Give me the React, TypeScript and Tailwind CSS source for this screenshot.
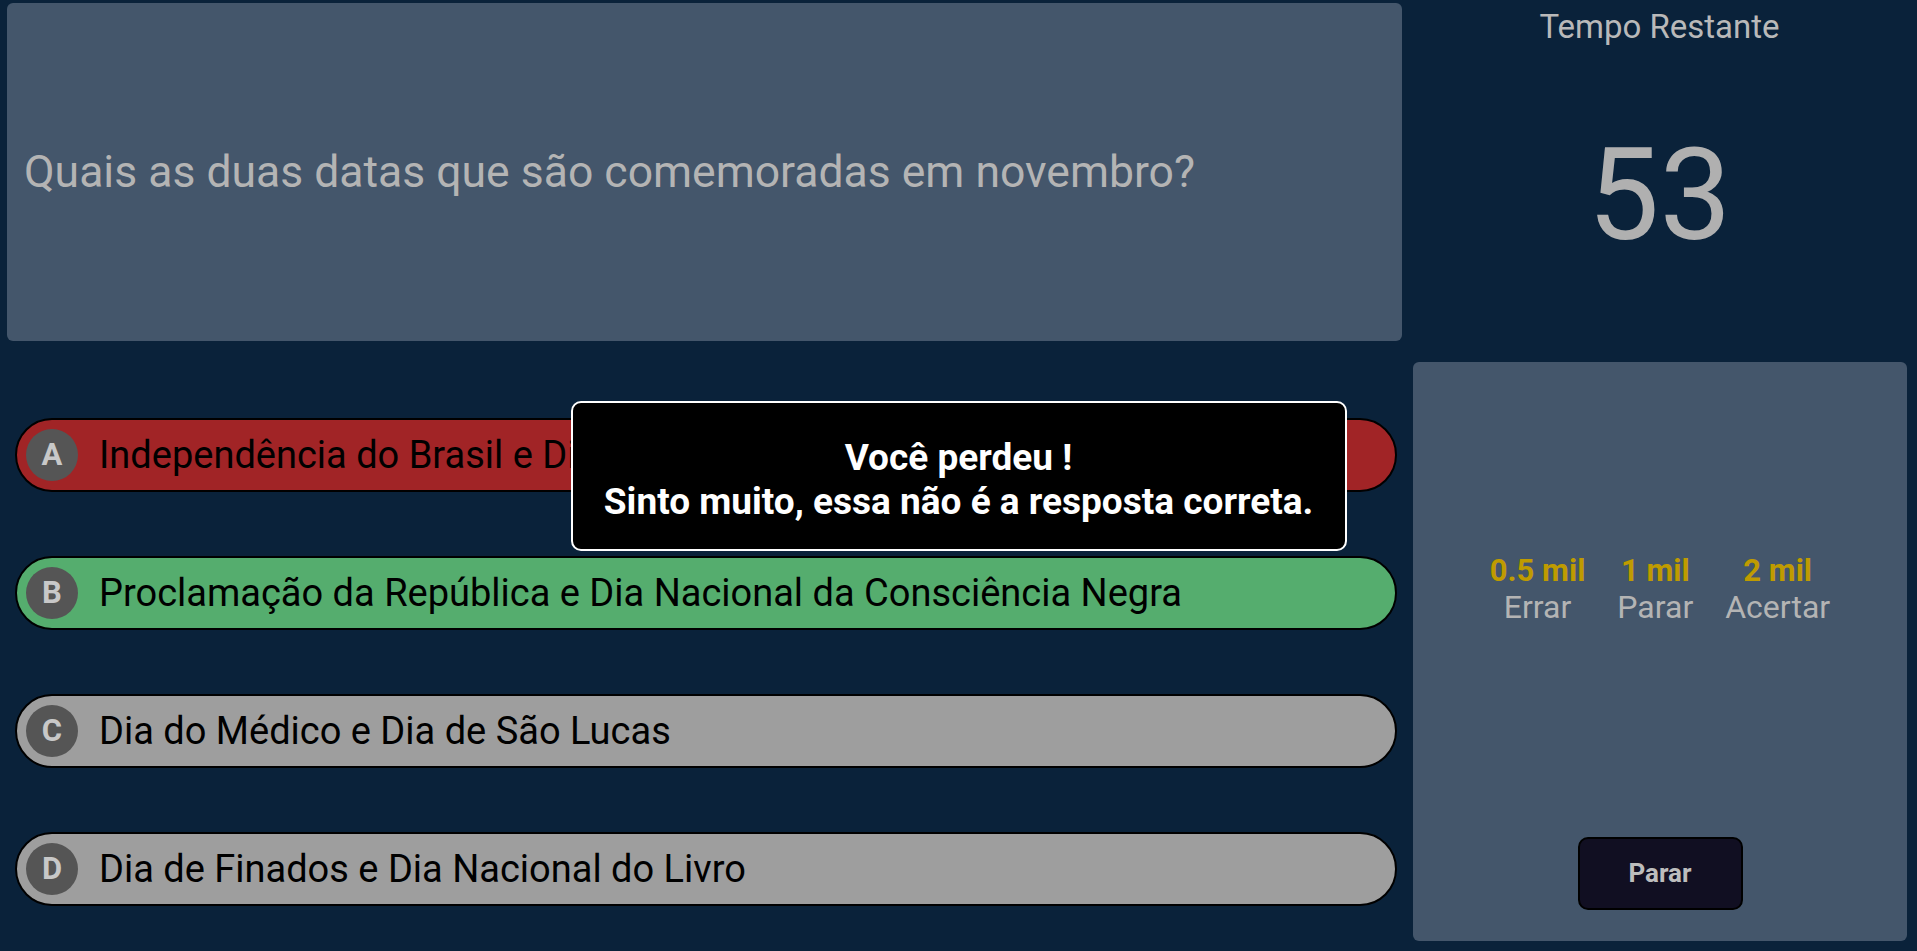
import React from "react";

type Answer = {
  letter: string;
  text: string;
  tone: "wrong" | "right" | "idle";
};

const answers: Answer[] = [
  { letter: "A", text: "Independência do Brasil e Dia da Bandeira", tone: "wrong" },
  { letter: "B", text: "Proclamação da República e Dia Nacional da Consciência Negra", tone: "right" },
  { letter: "C", text: "Dia do Médico e Dia de São Lucas", tone: "idle" },
  { letter: "D", text: "Dia de Finados e Dia Nacional do Livro", tone: "idle" },
];

const toneClass = {
  wrong: "bg-[#a12426]",
  right: "bg-[#55ad6e]",
  idle: "bg-[#9e9e9e]",
};

function AnswerPill({ answer }: { answer: Answer }) {
  return (
    <div
      className={`ml-[15px] flex h-[74px] w-[1382px] items-center rounded-full border-2 border-black pl-[9px] ${toneClass[answer.tone]}`}
    >
      <span className="flex h-[52px] w-[52px] shrink-0 items-center justify-center rounded-full bg-[#555555] text-[31px] font-bold text-[#c8c8c8]">
        {answer.letter}
      </span>
      <span className="ml-[21px] text-[38px] leading-none text-black">{answer.text}</span>
    </div>
  );
}

function Prize({ value, label }: { value: string; label: string }) {
  return (
    <div className="flex flex-col items-center leading-[37px]">
      <span className="text-[31px] font-bold text-[#bf9b00]">{value}</span>
      <span className="text-[32px] text-[#b4b4b4]">{label}</span>
    </div>
  );
}

export default function App() {
  return (
    <div
      className="grid h-screen w-full grid-cols-[1402px_1fr] overflow-hidden bg-[#0a223a]"
      style={{ fontFamily: "Roboto, 'Noto Sans', sans-serif" }}
    >
      {/* pergunta + alternativas */}
      <div className="flex flex-col pl-[7px] pt-[3px]">
        <div className="flex h-[338px] w-[1395px] items-center rounded-md bg-[#44566b] pl-[17px]">
          <h1 className="text-[44.5px] font-normal text-[#b4b4b4]">
            Quais as duas datas que são comemoradas em novembro?
          </h1>
        </div>
        <div className="-ml-[7px] mt-[77px] flex flex-col gap-[64px]">
          {answers.map((a) => (
            <AnswerPill key={a.letter} answer={a} />
          ))}
        </div>
      </div>

      {/* tempo + premios */}
      <div className="flex flex-col">
        <div className="flex h-[362px] flex-col items-center">
          <span className="mt-[8px] text-[33px] leading-[38px] text-[#b9b9b9]">Tempo Restante</span>
          <span className="mt-[85px] text-[128px] leading-[128px] text-[#b0b0b0]">53</span>
        </div>
        <div className="mb-[10px] ml-[11px] mr-[10px] flex flex-1 flex-col items-center rounded-md bg-[#44566b] pt-[190px]">
          <div className="flex gap-8">
            <Prize value="0.5 mil" label="Errar" />
            <Prize value="1 mil" label="Parar" />
            <Prize value="2 mil" label="Acertar" />
          </div>
          <button className="mb-[31px] mt-auto h-[73px] w-[165px] rounded-[10px] border-2 border-black bg-[#110f22] text-[26px] font-bold text-[#bdbdbd]">
            Parar
          </button>
        </div>
      </div>

      {/* aviso */}
      <div className="fixed inset-0 flex items-center justify-center">
        <div className="flex h-[150px] w-[776px] flex-col items-center justify-center rounded-[10px] border-2 border-white bg-black pt-[8px] text-[37px] font-bold leading-[44px] text-white">
          <p>Você perdeu !</p>
          <p>Sinto muito, essa não é a resposta correta.</p>
        </div>
      </div>
    </div>
  );
}
